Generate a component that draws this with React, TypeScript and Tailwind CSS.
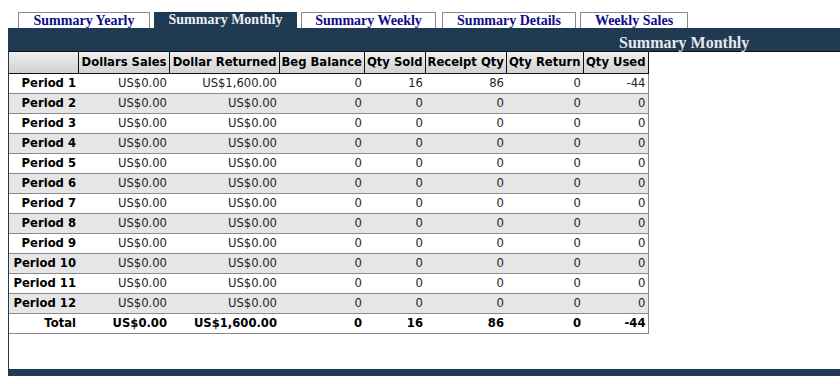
const tabs = [
  { label: 'Summary Yearly', w: 'w-[132px]', ml: 'ml-[18px]' },
  { label: 'Summary Monthly', w: 'w-[143px]', ml: 'ml-[4px]', active: true },
  { label: 'Summary Weekly', w: 'w-[135px]', ml: 'ml-[4px]' },
  { label: 'Summary Details', w: 'w-[134px]', ml: 'ml-[6px]' },
  { label: 'Weekly Sales', w: 'w-[108px]', ml: 'ml-[4px]' },
];

const columns = [
  { label: '', w: 'w-[69px]' },
  { label: 'Dollars Sales', w: 'w-[91px]' },
  { label: 'Dollar Returned', w: 'w-[110px]' },
  { label: 'Beg Balance', w: 'w-[85px]' },
  { label: 'Qty Sold', w: 'w-[61px]' },
  { label: 'Receipt Qty', w: 'w-[81px]' },
  { label: 'Qty Return', w: 'w-[77px]' },
  { label: 'Qty Used', w: 'w-[65px]' },
];

const rows = Array.from({ length: 12 }).map((_, i) =>
  i === 0
    ? ['Period 1', 'US$0.00', 'US$1,600.00', '0', '16', '86', '0', '-44']
    : [`Period ${i + 1}`, 'US$0.00', 'US$0.00', '0', '0', '0', '0', '0']
);

const total = ['Total', 'US$0.00', 'US$1,600.00', '0', '16', '86', '0', '-44'];

export default function App() {
  return (
    <div className="w-[840px] h-[384px] overflow-hidden bg-white font-['DejaVu_Sans',Verdana,sans-serif]">
      {/* tabs */}
      <div className="flex pt-[12px] h-[28px]">
        {tabs.map((t) =>
          t.active ? (
            <div
              key={t.label}
              className={`${t.w} ${t.ml} h-[16px] bg-[#1f3a51] text-[#eef0f6] text-center font-['Liberation_Serif',serif] font-bold text-[14px] leading-[16px]`}
            >
              {t.label}
            </div>
          ) : (
            <div
              key={t.label}
              className={`${t.w} ${t.ml} h-[16px] border border-b-0 border-[#8a8a8a] text-[#0c0c8c] text-center font-['Liberation_Serif',serif] font-bold text-[14px] leading-[15px]`}
            >
              {t.label}
            </div>
          )
        )}
      </div>

      {/* panel */}
      <div className="ml-[8px] border-l border-[#1f3a51]">
        <div className="h-[23px] bg-[#1f3a51] pl-[610px] text-[#e6e8f0] font-['Liberation_Serif',serif] font-bold text-[16px] leading-[30px]">
          Summary Monthly
        </div>
        <div className="h-[1px] bg-[#111]" />
        <table className="table-fixed border-collapse w-[639px] text-[11.6px]">
          <thead>
            <tr className="h-[21px] border-b border-[#111]">
              {columns.map((c, i) => (
                <th
                  key={i}
                  className={`${c.w} ${i > 0 ? 'border-l border-[#111]' : ''} ${i === columns.length - 1 ? 'border-r border-r-[#111]' : ''} bg-gradient-to-b from-[#eeeeee] to-[#d2d2d2] font-bold text-black text-right px-[2px] whitespace-nowrap leading-[20px] p-0`}
                >
                  {c.label}
                </th>
              ))}
            </tr>
          </thead>
          <tbody>
            {rows.map((r, ri) => (
              <tr
                key={ri}
                className={`h-[20px] border-b border-r border-[#8a8a8a] ${ri % 2 === 1 ? 'bg-[#e6e6e6]' : 'bg-white'}`}
              >
                {r.map((v, ci) => (
                  <td
                    key={ci}
                    className={`text-right px-[2px] py-0 leading-[19px] whitespace-nowrap ${ci === 0 ? 'font-bold text-black' : 'text-[#222]'}`}
                  >
                    {v}
                  </td>
                ))}
              </tr>
            ))}
            <tr className="h-[20px] border-b border-r border-[#8a8a8a] bg-white">
              {total.map((v, ci) => (
                <td
                  key={ci}
                  className="text-right px-[2px] py-0 leading-[19px] whitespace-nowrap font-bold text-black"
                >
                  {v}
                </td>
              ))}
            </tr>
          </tbody>
        </table>
        <div className="h-[35px]" />
      </div>
      <div className="ml-[8px] h-[7px] bg-[#1f3a51]" />
    </div>
  );
}
